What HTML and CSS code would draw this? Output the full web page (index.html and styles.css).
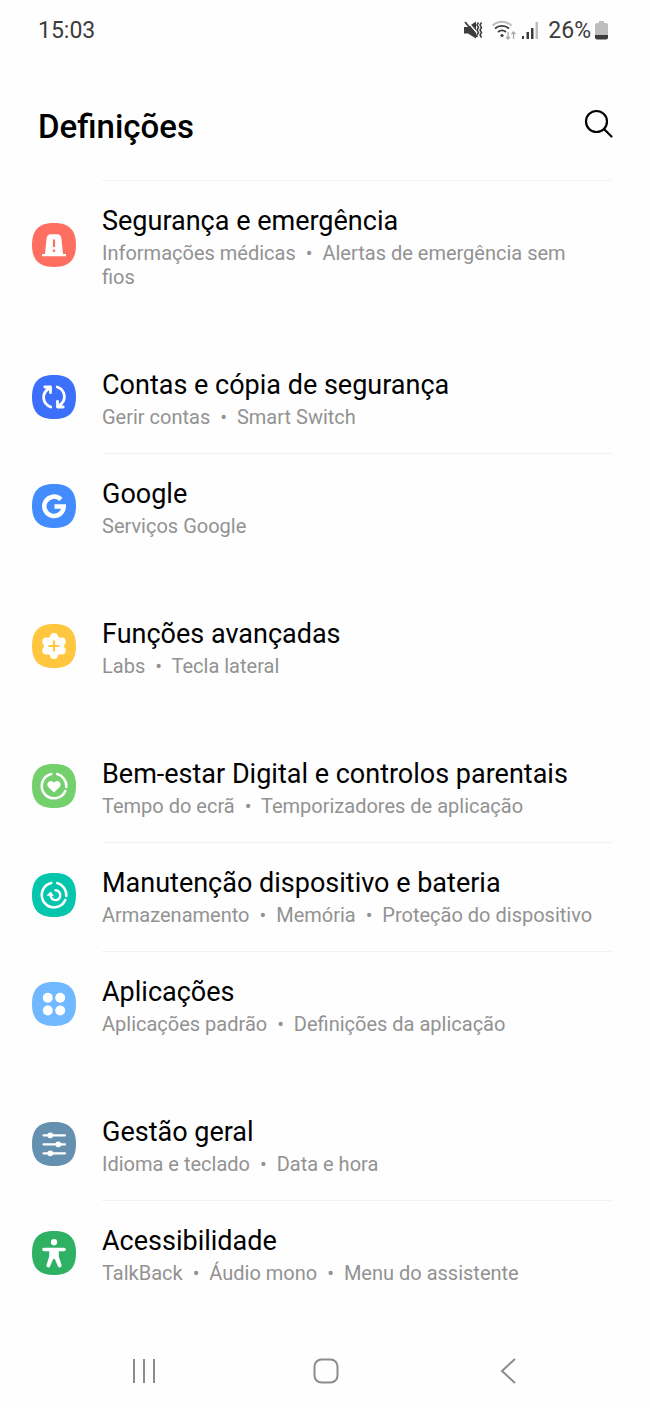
FILE: index.html
```html
<!DOCTYPE html>
<html lang="pt">
<head>
  <meta charset="UTF-8" />
  <meta name="viewport" content="width=device-width, initial-scale=1" />
  <title>Definições</title>
  <link rel="stylesheet" href="styles.css">
</head>
<body>
  <div class="status-bar">
    <span>15:03</span>
    <div class="status-icons">
      <svg width="20" height="20" viewBox="0 0 20 20" fill="#3c3c3c">
        <path d="M1 7h4l8-5.500v17L5 13.500H1z" />
        <path d="M3 0l13 15" stroke="#fefefe" stroke-width="1.500" />
        <path d="M2 2l12.500 15" stroke="#3c3c3c" stroke-width="1.800" />
        <path d="M15.500 2.500l-1.500 2.500 1.500 2.500-1.500 2.500 1.500 2.500-1.500 2.500M18.500 2.500l-1.500 2.500 1.500 2.500-1.500 2.500 1.500 2.500-1.500 2.500 1.500 2.500" fill="none" stroke="#3c3c3c" stroke-width="1.500" />
      </svg>
      <svg class="wifi" width="26" height="20" viewBox="0 0 26 20" fill="none" stroke-width="1.800">
        <path d="M1.500 5.500C7 .5 15 .5 20.500 5.500" stroke="#bdbdbd" />
        <path d="M4 8.500c4-3.500 10-3.500 14 0M7 12c2.500-2 5.500-2 8 0" stroke="#3c3c3c" />
        <circle cx="11" cy="15.500" r="1.600" fill="#3c3c3c" />
        <path d="M17 12v7M15 17l2 2 2-2M22.500 19v-7M20.500 14l2-2 2 2" stroke="#a8a8a8" stroke-width="1.300" />
      </svg>
      <svg width="18" height="20" viewBox="0 0 18 20">
        <path d="M1 16h2v3H1zM5.500 12h2.500v7H5.500zM10 8h2.500v11H10z" fill="#3c3c3c" />
        <path d="M14.500 2H17v17h-2.500z" fill="#bdbdbd" />
      </svg>
      <span class="battery-text">26%</span>
      <svg width="13" height="20" viewBox="0 0 13 20">
        <path d="M4 1h5v2h2q2 0 2 2v10H0V5q0-2 2-2h2z" fill="#bdbdbd" />
        <path d="M0 15h13v2.500q0 2-2 2H2q-2 0-2-2z" fill="#3c3c3c" />
      </svg>
    </div>
  </div>

  <header class="header">
    <h1>Definições</h1>
    <button class="search" aria-label="Pesquisar">
      <svg width="30" height="30" viewBox="0 0 30 30" fill="none" stroke="#000" stroke-width="2.200" stroke-linecap="round">
        <circle cx="12.500" cy="12.500" r="10.500" />
        <path d="M20.500 20.500l7 7" />
      </svg>
    </button>
  </header>

  <main class="settings">
    <section class="group continued">
      <a class="row" href="#">
        <svg class="icon coral" viewBox="0 0 44 44">
          <path class="shape" d="M22 0C37 0 44 7 44 22S37 44 22 44 0 37 0 22 7 0 22 0z" />
          <path d="M13 31l1.500-15q.5-4.700 4-4.700h7q3.500 0 4 4.700l1.500 15H34v2.200H10V31z" fill="#fff" />
          <path d="M22 16.500v7.500M22 26.500v2.500" stroke="#ff6f61" stroke-width="2.200" />
        </svg>
        <div class="text">
          <div class="title">Segurança e emergência</div>
          <div class="sub">Informações médicas <span class="dot">•</span> Alertas de emergência sem fios</div>
        </div>
      </a>
    </section>

    <section class="group">
      <a class="row" href="#">
        <svg class="icon blue" viewBox="0 0 44 44">
          <path class="shape" d="M22 0C37 0 44 7 44 22S37 44 22 44 0 37 0 22 7 0 22 0z" />
          <g fill="none" stroke="#fff" stroke-width="2.800" stroke-linecap="round" stroke-linejoin="round">
            <path d="M18.800 32C10.500 29 8.500 18.500 17.500 13M12.800 12h5.700v5.700" />
            <path d="M25.200 12C33.500 15 35.500 25.500 26.500 31M31.200 32h-5.700v-5.700" />
          </g>
        </svg>
        <div class="text">
          <div class="title">Contas e cópia de segurança</div>
          <div class="sub">Gerir contas <span class="dot">•</span> Smart Switch</div>
        </div>
      </a>
      <a class="row" href="#">
        <svg class="icon google" viewBox="0 0 44 44">
          <path class="shape" d="M22 0C37 0 44 7 44 22S37 44 22 44 0 37 0 22 7 0 22 0z" />
          <path d="M28.900 15.500A9.700 9.700 0 1 0 31.700 22.500H22.500" fill="none" stroke="#fff" stroke-width="4.500" />
        </svg>
        <div class="text">
          <div class="title">Google</div>
          <div class="sub">Serviços Google</div>
        </div>
      </a>
    </section>

    <section class="group">
      <a class="row" href="#">
        <svg class="icon yellow" viewBox="0 0 44 44">
          <path class="shape" d="M22 0C37 0 44 7 44 22S37 44 22 44 0 37 0 22 7 0 22 0z" />
          <g fill="#fff">
            <circle cx="22" cy="22" r="10.200" />
            <circle cx="22" cy="13" r="3.900" />
            <circle cx="29.800" cy="17.500" r="3.900" />
            <circle cx="29.800" cy="26.500" r="3.900" />
            <circle cx="22" cy="31" r="3.900" />
            <circle cx="14.200" cy="26.500" r="3.900" />
            <circle cx="14.200" cy="17.500" r="3.900" />
          </g>
          <path d="M22 16.500v11M16.500 22h11" stroke="#ffc640" stroke-width="2.200" />
        </svg>
        <div class="text">
          <div class="title">Funções avançadas</div>
          <div class="sub">Labs <span class="dot">•</span> Tecla lateral</div>
        </div>
      </a>
    </section>

    <section class="group">
      <a class="row" href="#">
        <svg class="icon green" viewBox="0 0 44 44">
          <path class="shape" d="M22 0C37 0 44 7 44 22S37 44 22 44 0 37 0 22 7 0 22 0z" />
          <path d="M25.200 10.100A12.300 12.300 0 0 1 34.300 23M33.300 27A12.300 12.300 0 1 1 19.300 10" fill="none" stroke="#fff" stroke-width="2.600" stroke-linecap="round" />
          <path d="M22 28.500l-5.700-5.500c-3.200-4 2.500-8.500 5.700-4.200 3.200-4.300 8.900.2 5.700 4.200z" fill="#fff" />
        </svg>
        <div class="text">
          <div class="title">Bem-estar Digital e controlos parentais</div>
          <div class="sub">Tempo do ecrã <span class="dot">•</span> Temporizadores de aplicação</div>
        </div>
      </a>
      <a class="row" href="#">
        <svg class="icon teal" viewBox="0 0 44 44">
          <path class="shape" d="M22 0C37 0 44 7 44 22S37 44 22 44 0 37 0 22 7 0 22 0z" />
          <g fill="none" stroke="#fff" stroke-width="2.600" stroke-linecap="round">
            <path d="M25.200 10.100A12.300 12.300 0 0 1 34.300 23M33.300 27A12.300 12.300 0 1 1 19.300 10" />
            <path d="M23.500 17.300A4.900 4.900 0 1 1 18.500 22" stroke-width="2.400" />
          </g>
          <path d="M14.500 22.500l4.200-4 3.300 4.700z" fill="#fff" />
        </svg>
        <div class="text">
          <div class="title">Manutenção dispositivo e bateria</div>
          <div class="sub">Armazenamento <span class="dot">•</span> Memória <span class="dot">•</span> Proteção do dispositivo</div>
        </div>
      </a>
      <a class="row" href="#">
        <svg class="icon sky" viewBox="0 0 44 44">
          <path class="shape" d="M22 0C37 0 44 7 44 22S37 44 22 44 0 37 0 22 7 0 22 0z" />
          <g fill="#fff">
            <circle cx="15.800" cy="15.800" r="5" />
            <circle cx="28.200" cy="15.800" r="5" />
            <circle cx="15.800" cy="28.500" r="5" />
            <circle cx="28.200" cy="28.500" r="5" />
          </g>
        </svg>
        <div class="text">
          <div class="title">Aplicações</div>
          <div class="sub">Aplicações padrão <span class="dot">•</span> Definições da aplicação</div>
        </div>
      </a>
    </section>

    <section class="group">
      <a class="row" href="#">
        <svg class="icon slate" viewBox="0 0 44 44">
          <path class="shape" d="M22 0C37 0 44 7 44 22S37 44 22 44 0 37 0 22 7 0 22 0z" />
          <path d="M11.500 13.300h21.500M11.500 22.300h21.500M11.500 31.300h21.500" stroke="#fff" stroke-width="2.200" stroke-linecap="round" />
          <g fill="#fff">
            <circle cx="18.300" cy="13.300" r="2.900" />
            <circle cx="26.300" cy="22.300" r="2.900" />
            <circle cx="18.300" cy="31.300" r="2.900" />
          </g>
        </svg>
        <div class="text">
          <div class="title">Gestão geral</div>
          <div class="sub">Idioma e teclado <span class="dot">•</span> Data e hora</div>
        </div>
      </a>
      <a class="row" href="#">
        <svg class="icon emerald" viewBox="0 0 44 44">
          <path class="shape" d="M22 0C37 0 44 7 44 22S37 44 22 44 0 37 0 22 7 0 22 0z" />
          <g fill="#fff">
            <circle cx="22" cy="11.200" r="3.100" />
            <path d="M12 16.700h20a1.800 1.800 0 0 1 0 3.600h-5.200v5.200l2.700 8.500a1.900 1.900 0 0 1-3.600 1.200L22.800 28h-1.600l-3.100 7.200a1.900 1.900 0 0 1-3.600-1.200l2.700-8.500v-5.200H12a1.800 1.800 0 0 1 0-3.600z" />
          </g>
        </svg>
        <div class="text">
          <div class="title">Acessibilidade</div>
          <div class="sub">TalkBack <span class="dot">•</span> Áudio mono <span class="dot">•</span> Menu do assistente</div>
        </div>
      </a>
    </section>
  </main>

  <nav class="nav-bar">
    <button aria-label="Recentes">
      <svg width="26" height="26" viewBox="0 0 26 26" fill="none" stroke="#8c8c8c" stroke-width="2">
        <path d="M3 1v24M13 1v24M23 1v24" />
      </svg>
    </button>
    <button aria-label="Início">
      <svg width="26" height="26" viewBox="0 0 26 26" fill="none" stroke="#8c8c8c" stroke-width="2">
        <rect x="1.500" y="1.500" width="23" height="23" rx="7" />
      </svg>
    </button>
    <button aria-label="Voltar">
      <svg width="26" height="26" viewBox="0 0 26 26" fill="none" stroke="#8c8c8c" stroke-width="2">
        <path d="M20 1L7 13l13 12" />
      </svg>
    </button>
  </nav>
</body>
</html>
```

FILE: styles.css
```css
body {
  margin: 0;
  min-height: 100vh;
  display: flex;
  flex-direction: column;
  font-family: Roboto, "Noto Sans", sans-serif;
  background: #fefefe;
  color: #000;
}
button {
  padding: 0;
  border: none;
  background: none;
  cursor: pointer;
}
svg {
  display: block;
}

.status-bar {
  display: flex;
  justify-content: space-between;
  align-items: center;
  height: 60px;
  padding: 0 42px 0 38px;
  font-size: 23px;
  color: #3c3c3c;
}
.status-icons {
  display: flex;
  align-items: center;
  gap: 4px;
}
.wifi {
  margin-left: 4px;
}
.battery-text {
  margin-left: 5px;
}

.header {
  display: flex;
  justify-content: space-between;
  align-items: center;
  height: 120px;
  padding: 0 36px 0 38px;
}
h1 {
  margin: 12px 0 0;
  font-size: 33px;
  font-weight: 500;
}
.search {
  margin-top: 8px;
}

.settings {
  display: flex;
  flex-direction: column;
  gap: 31px;
}
.row {
  display: flex;
  align-items: center;
  gap: 26px;
  padding: 0 38px 0 32px;
  color: inherit;
  text-decoration: none;
}
.icon {
  flex: none;
  width: 44px;
  height: 44px;
  margin-bottom: 3px;
}
.coral .shape { fill: #ff6f61; }
.blue .shape { fill: #3d70fa; }
.google .shape { fill: #438cfd; }
.yellow .shape { fill: #ffc640; }
.green .shape { fill: #73d06c; }
.teal .shape { fill: #05c5ad; }
.sky .shape { fill: #70b8ff; }
.slate .shape { fill: #6690b0; }
.emerald .shape { fill: #2fb164; }

.text {
  flex: 1;
  padding: 23px 0 24px;
  border-top: 1px solid transparent;
}
.row + .row .text,
.continued .text {
  border-top-color: #f2f2f2;
}
.title {
  font-size: 27px;
  line-height: 34px;
}
.sub {
  margin-top: 3px;
  padding-right: 12px;
  font-size: 20px;
  line-height: 24px;
  color: #929292;
}
.dot {
  margin: 0 5px;
}

.nav-bar {
  display: grid;
  grid-template-columns: repeat(3, 1fr);
  justify-items: center;
  align-items: center;
  height: 74px;
  margin-top: auto;
  padding: 0 51px 0 53px;
}
```
